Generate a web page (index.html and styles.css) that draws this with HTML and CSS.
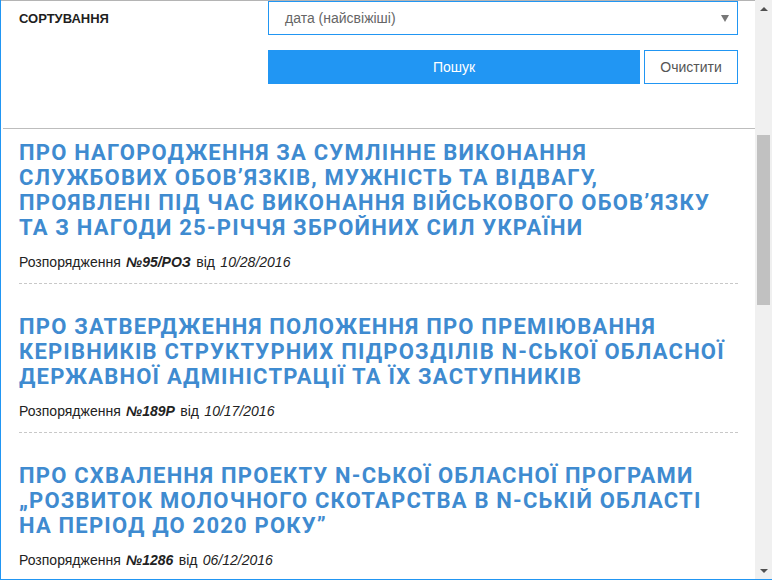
FILE: index.html
```
<!DOCTYPE html>
<html lang="uk">
<head>
<meta charset="utf-8">
<title>Розпорядження</title>
<link rel="stylesheet" href="styles.css">
</head>
<body>
<div class="frame">
  <div class="viewport">
    <form class="filters">
      <label class="filters__label">СОРТУВАННЯ</label>
      <div class="select">
        <span class="select__value">дата (найсвіжіші)</span>
        <span class="select__arrow"></span>
      </div>
      <div class="filters__spacer"></div>
      <div class="filters__actions">
        <button type="button" class="btn btn--primary">Пошук</button>
        <button type="button" class="btn btn--ghost">Очистити</button>
      </div>
    </form>
    <div class="divider"></div>
    <ul class="results">
      <li class="doc">
        <a class="doc__title">ПРО НАГОРОДЖЕННЯ ЗА СУМЛІННЕ ВИКОНАННЯ СЛУЖБОВИХ ОБОВ’ЯЗКІВ, МУЖНІСТЬ ТА ВІДВАГУ, ПРОЯВЛЕНІ ПІД ЧАС ВИКОНАННЯ ВІЙСЬКОВОГО ОБОВ’ЯЗКУ ТА З НАГОДИ 25-РІЧЧЯ ЗБРОЙНИХ СИЛ УКРАЇНИ</a>
        <p class="doc__meta">Розпорядження <b class="doc__num">№95/РОЗ</b> від <i class="doc__date">10/28/2016</i></p>
      </li>
      <li class="doc">
        <a class="doc__title">ПРО ЗАТВЕРДЖЕННЯ ПОЛОЖЕННЯ ПРО ПРЕМІЮВАННЯ КЕРІВНИКІВ СТРУКТУРНИХ ПІДРОЗДІЛІВ N-СЬКОЇ ОБЛАСНОЇ ДЕРЖАВНОЇ АДМІНІСТРАЦІЇ ТА ЇХ ЗАСТУПНИКІВ</a>
        <p class="doc__meta">Розпорядження <b class="doc__num">№189Р</b> від <i class="doc__date">10/17/2016</i></p>
      </li>
      <li class="doc">
        <a class="doc__title">ПРО СХВАЛЕННЯ ПРОЕКТУ N-СЬКОЇ ОБЛАСНОЇ ПРОГРАМИ „РОЗВИТОК МОЛОЧНОГО СКОТАРСТВА В N-СЬКІЙ ОБЛАСТІ НА ПЕРІОД ДО 2020 РОКУ”</a>
        <p class="doc__meta">Розпорядження <b class="doc__num">№1286</b> від <i class="doc__date">06/12/2016</i></p>
      </li>
    </ul>
  </div>
  <div class="scrollbar">
    <span class="scrollbar__btn scrollbar__btn--up"></span>
    <div class="scrollbar__track"><span class="scrollbar__thumb"></span></div>
    <span class="scrollbar__btn scrollbar__btn--down"></span>
  </div>
</div>
</body>
</html>
```
FILE: styles.css
```
* { box-sizing: border-box; }
html, body { margin: 0; padding: 0; background: #fff; }
body { font-family: "Liberation Sans", Arial, sans-serif; color: #222; }

.frame {
  width: 772px;
  height: 580px;
  display: flex;
  border-left: 1px solid #2196f3;
  border-bottom: 1px solid #2196f3;
  overflow: hidden;
}
.viewport {
  flex: 1;
  min-width: 0;
  border-top: 1px solid #b4b4b4;
  overflow: hidden;
}

.filters {
  display: grid;
  grid-template-columns: 249px 470px;
  row-gap: 15px;
  padding: 0 0 0 18px;
  margin: 0;
}
.filters__label {
  font-weight: bold;
  font-size: 13px;
  padding-top: 10px;
  color: #1e1e1e;
}
.select {
  height: 34px;
  border: 1px solid #2196f3;
  display: flex;
  align-items: center;
  justify-content: space-between;
  padding: 0 8px 0 16px;
  font-size: 14px;
  color: #666;
}
.select__arrow {
  width: 0; height: 0;
  border-left: 4px solid transparent;
  border-right: 4px solid transparent;
  border-top: 7px solid #777;
}
.filters__actions {
  display: flex;
  gap: 4px;
  height: 34px;
}
.btn {
  font-family: "Liberation Sans", Arial, sans-serif;
  font-size: 14px;
  height: 34px;
  border: 1px solid #2196f3;
  cursor: pointer;
}
.btn--primary {
  flex: 1;
  background: #2196f3;
  color: #fff;
}
.btn--ghost {
  width: 94px;
  background: #fff;
  color: #555;
}

.divider {
  height: 1px;
  background: #bdbdbd;
  margin: 44px 0 0 2px;
}

.results {
  list-style: none;
  margin: 0;
  padding: 0 17px 0 18px;
}
.doc {
  padding: 30px 0 12px;
  border-bottom: 1px dashed #c8c8c8;
}
.doc:first-child { padding-top: 11px; }
.doc__title {
  display: block;
  padding-right: 6px;
  font-family: Roboto, "Liberation Sans", sans-serif;
  font-weight: bold;
  font-size: 22px;
  line-height: 25px;
  letter-spacing: 1.2px;
  color: #3f8bd0;
  text-decoration: none;
}
.doc__meta {
  margin: 13px 0 0;
  font-size: 14px;
  line-height: 18px;
  word-spacing: 1.5px;
}
.doc__num { font-style: italic; font-weight: bold; }
.doc__date { font-style: italic; }

.scrollbar {
  width: 17px;
  flex: none;
  background: #f0f0f0;
  display: flex;
  flex-direction: column;
}
.scrollbar__btn {
  height: 17px;
  flex: none;
  display: flex;
  align-items: center;
  justify-content: center;
}
.scrollbar__btn::before {
  content: "";
  width: 0; height: 0;
  border-left: 4px solid transparent;
  border-right: 4px solid transparent;
}
.scrollbar__btn--up::before { border-bottom: 4px solid #505050; }
.scrollbar__btn--down::before { border-top: 4px solid #505050; }
.scrollbar__track {
  flex: 1;
  padding: 118px 2px 0;
}
.scrollbar__thumb {
  display: block;
  height: 170px;
  background: #c1c1c1;
}
```
